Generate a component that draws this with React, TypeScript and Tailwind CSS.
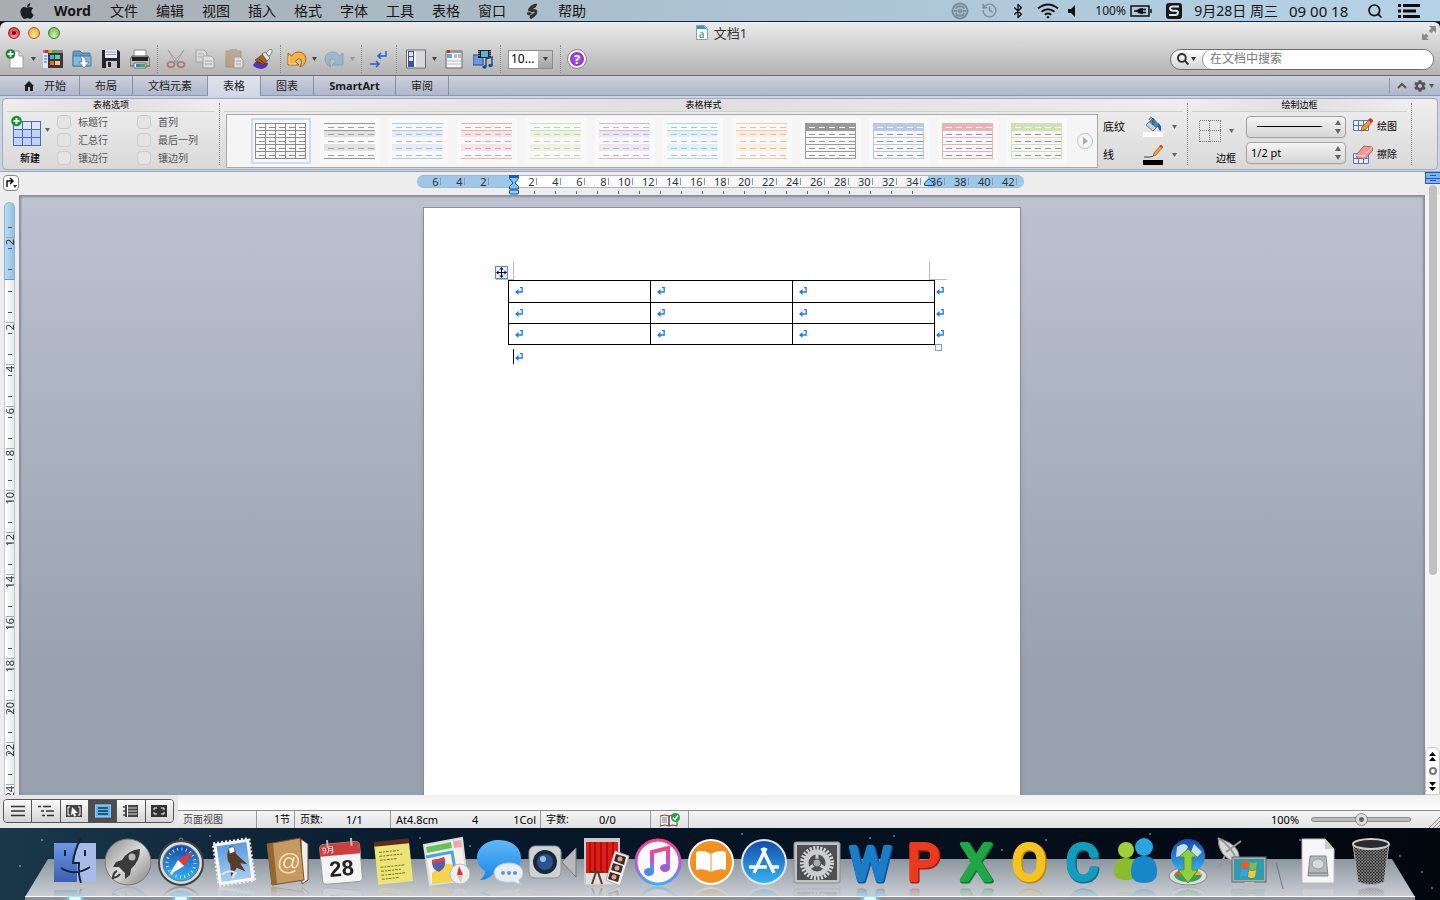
import React from "react";
import { clsx } from "clsx";
import { LuBluetooth, LuHistory, LuSearch } from "react-icons/lu";
import { FaApple, FaSearch } from "react-icons/fa";
import { IoMdSettings } from "react-icons/io";

const MENUS = ["文件", "编辑", "视图", "插入", "格式", "字体", "工具", "表格", "窗口"];
const TABS = [
  { label: "开始", width: "w-[68px]", home: true },
  { label: "布局", width: "w-[52px]" },
  { label: "文档元素", width: "w-[74px]" },
  { label: "表格", width: "w-[52px]", active: true },
  { label: "图表", width: "w-[52px]" },
  { label: "SmartArt", width: "w-[81px]" },
  { label: "审阅", width: "w-[52px]" },
];
const RULER_NUMBERS = [
  "6", "4", "2", "", "2", "4", "6", "8", "10", "12", "14", "16", "18", "20",
  "22", "24", "26", "28", "30", "32", "34", "36", "38", "40", "42",
];
const SIDE_NUMBERS = ["", "2", "4", "6", "8", "10", "12", "14", "16", "18", "20", "22", "24"];

/* ---------- Menu bar ---------- */

const MenuBar: React.FC = () => (
  <header className="flex h-[22px] shrink-0 items-center border-b border-[#10283c] bg-linear-to-r from-[#a9adb0] via-[#abc3d3] to-[#b6d2e6] text-[14px] leading-5 text-[#151515]">
    <button type="button" aria-label="Apple" className="flex w-[54px] justify-center">
      <FaApple className="size-[18px] text-[#1c1f24]" />
    </button>
    <nav className="flex gap-[18px]">
      <button type="button" className="w-[38px] text-left font-bold">Word</button>
      {MENUS.map((m) => (
        <button type="button" key={m}>{m}</button>
      ))}
      <button type="button" aria-label="脚本" className="w-4">
        <svg viewBox="0 0 16 18" className="h-4 w-4 fill-[#333]">
          <path d="M5 5Q9 0 14 1l-2 4-4 2q6-1 6 3 0 4-7 8l-2-1 1-3q-4 0-4-3l3-1q-3-2 0-5z" />
          <path d="M5 9.500q3 2 6 1M6 13q3-1 4-2" stroke="#aebfcb" fill="none" />
        </svg>
      </button>
      <button type="button">帮助</button>
    </nav>
    <div className="ml-auto flex items-center pr-5">
      <svg viewBox="0 0 18 18" className="size-[18px]" fill="none" stroke="#7c8f9c" strokeWidth="2">
        <circle cx="9" cy="9" r="7.500" />
        <path d="M4.500 7a5 5 0 0 1 9 0M13.500 11a5 5 0 0 1-9 0M3 9h3M12 9h3" />
        <circle cx="9" cy="9" r="1.500" />
      </svg>
      <LuHistory className="ml-3 size-[17px] text-[#7c8f9c]" />
      <LuBluetooth className="ml-3 size-4 text-[#111]" />
      <svg viewBox="0 0 22 16" className="ml-[11px] h-4 w-[22px]" fill="none" stroke="#111" strokeWidth="2">
        <path d="M1 5.500q10-8 20 0M4.500 8.800q6.500-5 13 0M7.800 11.800q3.200-2.500 6.400 0" />
        <circle cx="11" cy="14.300" r="1.300" fill="#111" stroke="none" />
      </svg>
      <svg viewBox="0 0 10 12" className="ml-2 h-3 w-[10px] fill-[#111]">
        <path d="M1 4h3l4-4v12L4 8H1z" />
      </svg>
      <span className="ml-[18px] w-[33px] text-[12px]">100%</span>
      <svg viewBox="0 0 22 12" className="ml-[2px] h-3 w-[22px]" fill="none" stroke="#111" strokeWidth="1.500">
        <path d="M17 1h2v10H1V1h18v10M21 4v4" />
        <path d="M4 6h3M13 4.500h3M13 7.500h3" />
        <path d="M6 6q2-3 7-3v6q-5 0-7-3z" fill="#111" stroke="none" />
      </svg>
      <svg viewBox="0 0 16 16" className="ml-[14px] size-4">
        <rect width="16" height="16" rx="3" fill="#161616" />
        <path d="M13 3.500H7q-3 0-3 2t3 2.200h3q2 .3 2 2t-2 2.300H3" fill="none" stroke="#d7e7f1" strokeWidth="2" />
      </svg>
      <span className="ml-3 whitespace-pre">9月28日 周三</span>
      <span className="ml-[11px] w-[62px] text-[15px]">09 00 18</span>
      <LuSearch className="ml-4 size-4 text-[#111]" strokeWidth={2.5} />
      <svg viewBox="0 0 22 14" className="ml-[15px] h-[14px] w-[22px] fill-[#0c0c0c]">
        <path d="M0 0h3v3H0zM0 5.500h3v3H0zM0 11h3v3H0zM5 0h17v3H5zM5 5.500h13v3H5zM5 11h17v3H5z" />
      </svg>
    </div>
  </header>
);

/* ---------- Title bar and standard toolbar ---------- */

const Caret: React.FC<{ className?: string }> = ({ className }) => (
  <svg viewBox="0 0 5 4" className={clsx("h-1 w-[5px] shrink-0 fill-current", className)}>
    <path d="M0 0h5L2.500 4z" />
  </svg>
);

const Dots: React.FC<{ className?: string }> = ({ className }) => (
  <span className={clsx("w-0 shrink-0 border-l border-dotted border-[#8a8a8a]", className)} />
);

interface ToolProps {
  label: string;
  faded?: boolean;
  menu?: boolean;
  narrow?: boolean;
  children: React.ReactNode;
}

const Tool: React.FC<ToolProps> = ({ label, faded, menu, narrow, children }) => (
  <>
    <button
      type="button"
      aria-label={label}
      className={clsx(
        "flex shrink-0 justify-center",
        narrow ? "w-[26px]" : "w-[29px]",
        faded && "opacity-45"
      )}
    >
      <svg viewBox="0 0 20 20" className="size-5">{children}</svg>
    </button>
    {menu && (
      <button type="button" aria-label={`${label}选项`} className="flex w-[9px] shrink-0 justify-center">
        <Caret className={faded ? "text-[#999]" : "text-[#444]"} />
      </button>
    )}
  </>
);

const Toolbar: React.FC = () => (
  <div className="flex h-8 items-center">
    <Tool label="新建" menu>
      <path d="M5 2h9l4 5v12H5z" fill="#fff" stroke="#999" />
      <path d="M14 2v5h4" fill="#ddd" stroke="#999" />
      <circle cx="5.500" cy="5" r="4.800" fill="#15802c" />
      <path d="M5.500 2v6M2.500 5h6" stroke="#fff" strokeWidth="1.800" />
    </Tool>
    <Tool label="模板">
      <path d="M0 1h20v18H0z" fill="#39393b" />
      <path d="M0 1h20v3H0z" fill="#8a8a8a" />
      <path d="M0 4h5v15H0z" fill="#dfe7fb" />
      <path d="M1 7h3M1 10h3M1 13h3" stroke="#4168c8" />
      <path d="M2 1h3v3H2z" fill="#e22" />
      <path d="M6 1h3v3H6z" fill="#fa0" />
      <path d="M10 1h3v3h-3z" fill="#3b3" />
      <path d="M7 6h4v4H7z" fill="#2bb5f0" />
      <path d="M12 6h5v4h-5z" fill="#57d4a0" />
      <path d="M7 12h4v4H7z" fill="#f60" />
      <path d="M12 12h5v4h-5z" fill="#fb9" />
    </Tool>
    <Tool label="打开">
      <path d="M1 17V3q0-1 1-1h6l2 2h8v13z" fill="#5e9bc1" stroke="#477f9f" />
      <path d="M1 7h18v10H1z" fill="#84b9d8" stroke="#477f9f" />
      <path d="M8 7q6 0 6 6h3l-5 6-5-6h3q0-4-2-6z" fill="#fff" stroke="#456" strokeWidth=".6" />
    </Tool>
    <Tool label="保存">
      <path d="M1 1h16l2 2v16H1z" fill="#252528" />
      <path d="M4 1h12v8H4z" fill="#e9eef6" />
      <path d="M5 3h10M5 5.500h10" stroke="#8b9ab5" />
      <path d="M5 12h11v7H5z" fill="#c3c6cc" />
      <path d="M7 13h3v5H7z" fill="#222" />
    </Tool>
    <Tool label="打印">
      <path d="M4 1h12v8H4z" fill="#fff" stroke="#888" />
      <path d="M0 11l2-4h16l2 4v6H0z" fill="#bbb" stroke="#555" />
      <path d="M2 8h16v4H2z" fill="#232323" />
      <path d="M4 14h12v5H4z" fill="#fff" stroke="#666" />
      <path d="M6 15h9v3H6z" fill="#2387cf" />
      <path d="M10 15h5v3h-5z" fill="#4aa755" />
    </Tool>
    <Dots className="mx-[3px] h-7" />
    <Tool label="剪切" faded>
      <path d="M2 1l10 12-2 1zM18 1L8 13l2 1z" fill="#fff" stroke="#555" strokeWidth=".8" />
      <ellipse cx="5" cy="15.500" rx="3.500" ry="2.700" fill="none" stroke="#a0302c" strokeWidth="2" />
      <ellipse cx="15" cy="15.500" rx="3.500" ry="2.700" fill="none" stroke="#a0302c" strokeWidth="2" />
    </Tool>
    <Tool label="复制" faded>
      <path d="M1 1h8l3 3v9H1z" fill="#eee" stroke="#777" />
      <path d="M8 7h8l3 3v9H8z" fill="#fff" stroke="#777" />
      <path d="M3 5h6M3 8h4M10 12h7M10 15h7" stroke="#888" />
    </Tool>
    <Tool label="粘贴" faded>
      <path d="M2 2h15v16H2z" fill="#b5803b" stroke="#85622c" />
      <path d="M6 0h7v4H6z" fill="#888" />
      <path d="M10 8h6l3 3v8h-9z" fill="#fff" stroke="#777" />
      <path d="M12 12h5M12 15h5" stroke="#888" />
    </Tool>
    <Tool label="格式刷">
      <path d="M0 16q3-5 6-4l9 2q0 5-7 6-7-1-8-4z" fill="#5233c9" />
      <path d="M2 11l8-6 5 6-5 6z" fill="#a46320" stroke="#5b330d" strokeWidth=".6" />
      <path d="M4 12l7 4M6 10l6 5" stroke="#5b330d" />
      <path d="M9 5l3-2 5 6-3 3z" fill="#e0e0e0" stroke="#444" strokeWidth=".6" />
      <path d="M13 4l4-4q3 0 2 3l-3 4z" fill="#fff" stroke="#555" strokeWidth=".7" />
    </Tool>
    <Dots className="mx-[3px] h-7" />
    <Tool label="撤销" menu narrow>
      <path d="M1 4v12h11l-3.500-3.500q2-4 5-2.500 2.500 3-.5 8 6-2 6-8.500Q18 3 11 3 7 3 4.500 7z" fill="#f7b043" stroke="#a76508" />
      <path d="M2 7v8h7" fill="none" stroke="#ffdf9c" />
    </Tool>
    <Tool label="重做" menu faded>
      <path d="M19 4v12H8l3.500-3.500q-2-4-5-2.500-2.500 3 .5 8-6-2-6-8.500Q2 3 9 3q4 0 6.500 4z" fill="#6ea9d0" stroke="#3b7aa3" />
    </Tool>
    <Dots className="mx-1 h-7" />
    <Tool label="显示段落标记" narrow>
      <path d="M17 2v5H9M12 4L9 7l3 3" fill="none" stroke="#2563dc" strokeWidth="1.500" />
      <path d="M1 15h9M7 12l3 3-3 3" fill="none" stroke="#2563dc" strokeWidth="1.500" />
    </Tool>
    <Dots className="mx-1 h-7" />
    <Tool label="边栏" menu>
      <path d="M.5 1h19v18H.5z" fill="#f3f3f5" stroke="#666" />
      <path d="M10 2h9v16h-9z" fill="#d8d8da" />
      <path d="M2 2h6v16H2z" fill="#3a53a0" />
      <path d="M3 3h4v4H3zM3 8h4v4H3z" fill="#dfe6fa" />
    </Tool>
    <Tool label="工具箱">
      <path d="M2 2h16v17H2z" fill="#f5f5f5" stroke="#666" />
      <path d="M2 2h16v2H2z" fill="#999" />
      <path d="M3 5h5v4H3z" fill="#58b1d5" />
      <path d="M10 5h3v4h-3zM14 5h3v4h-3z" fill="#bbb" />
      <path d="M3 12h14M3 15h14" stroke="#bbb" />
      <path d="M3 1h3v3H3z" fill="#d22" />
    </Tool>
    <Tool label="媒体">
      <path d="M0 6h10v10H0z" fill="#6d97de" stroke="#23468c" />
      <path d="M5 1h13v8H5z" fill="#222" />
      <path d="M8 2h7v6H8z" fill="#51b5d8" />
      <path d="M6 2v6M17 2v6" stroke="#eee" strokeDasharray="1 1" />
      <path d="M13 18V10l6-2v8" fill="none" stroke="#1f4a86" strokeWidth="1.500" />
      <ellipse cx="11.500" cy="18" rx="2.200" ry="1.700" fill="#1f4a86" />
      <ellipse cx="17.500" cy="16.500" rx="2.200" ry="1.700" fill="#1f4a86" />
    </Tool>
    <Dots className="mx-[3px] h-7" />
    <div className="relative ml-1 flex h-[19px] w-[45px] border border-[#8d8d8d] bg-white">
      <select aria-label="缩放" className="w-full appearance-none pl-[2px] text-[12px] leading-4 text-black">
        <option>10...</option>
      </select>
      <span className="pointer-events-none absolute inset-y-0 right-0 flex w-[14px] items-center justify-center bg-linear-to-b from-[#c9c9c9] to-[#a5a5a5]">
        <Caret className="text-[#444]" />
      </span>
    </div>
    <Dots className="mx-[7px] h-7" />
    <button type="button" aria-label="帮助" className="flex size-[18px] items-center justify-center rounded-full border-2 border-white bg-radial from-[#c45bee] to-[#7a1bb8] text-[13px] leading-[14px] font-bold text-white outline outline-[#888]">
      ?
    </button>
    <div className="mr-[6px] ml-auto flex h-[21px] w-[264px] rounded-full border border-[#6d6d6d] bg-linear-to-b from-white to-[#d5d5d5]">
      <button type="button" aria-label="搜索选项" className="flex w-[31px] items-center justify-center gap-[2px] text-[#333]">
        <FaSearch className="size-3" />
        <Caret />
      </button>
      <input
        type="search"
        aria-label="在文档中搜索"
        placeholder="在文档中搜索"
        className="min-w-0 flex-1 rounded-full border-l border-[#8a8a8a] bg-white pl-[7px] text-[12px] leading-4 placeholder:text-[#777]"
      />
    </div>
  </div>
);

const TitleBar: React.FC = () => (
  <div className="shrink-0 rounded-t-md border-b border-[#6b6b6f] bg-linear-to-b from-[#ececec] to-[#b3b3b3]">
    <div className="grid h-[21px] grid-cols-3 items-center">
      <div className="flex gap-2 pl-2">
        <button type="button" aria-label="关闭" className="flex size-3 items-center justify-center rounded-full border border-[#93262b] bg-radial-[at_50%_80%] from-[#ff9c97] to-[#d8222f]">
          <span className="size-1 rounded-full bg-[#6d0a10]" />
        </button>
        <button type="button" aria-label="最小化" className="size-3 rounded-full border border-[#9a6420] bg-radial-[at_50%_80%] from-[#ffe8a0] to-[#eb9a2e]" />
        <button type="button" aria-label="缩放窗口" className="size-3 rounded-full border border-[#3c7b2f] bg-radial-[at_50%_80%] from-[#d1f5ae] to-[#5cb04a]" />
      </div>
      <h1 className="flex items-center justify-center gap-[6px] pl-[3px] text-[13px] leading-4 text-[#333]">
        <svg viewBox="0 0 12 15" className="h-[15px] w-3">
          <path d="M.5.5h8l3 3v11H.5z" fill="#fff" stroke="#999" />
          <path d="M1 1h7l3 3H1z" fill="#1e9fc5" />
          <text x="3" y="13" fontSize="12" fill="#2276a8" fontFamily="Liberation Serif">a</text>
        </svg>
        文档1
      </h1>
      <button type="button" aria-label="全屏" className="mr-1 justify-self-end">
        <svg viewBox="0 0 14 14" className="size-[14px] fill-[#8a8a8a]">
          <path d="M7 0h7v7l-2.300-2.300-2.500 2.500-2.400-2.400 2.500-2.500zM0 7l2.300 2.300 1.800-1.800 2.400 2.400-1.800 1.800L7 14H0z" />
        </svg>
      </button>
    </div>
    <Toolbar />
  </div>
);

/* ---------- Ribbon ---------- */

const RibbonTabs: React.FC = () => (
  <div className="flex h-5 shrink-0 items-stretch border-b border-[#8e98b4] bg-linear-to-b from-[#cdd1dd] to-[#b0b7cb] text-[11px] leading-4 text-[#1c1c1c]">
    {TABS.map((tab) => (
      <button
        type="button"
        key={tab.label}
        className={clsx(
          "box-content flex items-center justify-center border-r border-[#878fa4]",
          tab.width,
          tab.home && "gap-[10px] pl-[11px]",
          tab.active && "-mb-px bg-linear-to-b from-[#dfe2ee] to-[#d3d7e7]",
          tab.label === "SmartArt" && "font-bold"
        )}
      >
        {tab.home && (
          <svg viewBox="0 0 10 10" className="size-[10px] fill-[#1d1d1d]">
            <path d="M5 0l5 5H9v5H6V6H4v4H1V5H0z" />
          </svg>
        )}
        {tab.label}
      </button>
    ))}
    <button type="button" aria-label="收起功能区" className="my-[2px] ml-auto flex w-6 items-center justify-center border-l border-[#8e96aa]">
      <svg viewBox="0 0 10 7" className="h-[7px] w-[10px]" fill="none" stroke="#555" strokeWidth="2">
        <path d="M1 6l4-4 4 4" />
      </svg>
    </button>
    <button type="button" aria-label="功能区设置" className="flex w-[27px] items-center gap-[2px] text-[#555]">
      <IoMdSettings className="size-[14px]" />
      <Caret />
    </button>
  </div>
);

const GroupTitle: React.FC<{ children: React.ReactNode }> = ({ children }) => (
  <h2 className="mx-1 flex h-[13px] items-center justify-center border-b border-[#d0d0d0] bg-linear-to-r from-transparent via-[#dfdfdf] to-transparent text-[9px] leading-3 text-black">
    {children}
  </h2>
);

const CheckOption: React.FC<{ label: string }> = ({ label }) => (
  <label className="flex h-[18px] items-center gap-[7px] text-[10px] leading-4 text-[#555]">
    <input type="checkbox" className="size-[14px] appearance-none rounded border border-[#cbcbcf] bg-[#e4e4e4]" />
    {label}
  </label>
);

const DASH = "6 4";

const GridThumb: React.FC = () => (
  <svg viewBox="0 0 51 36" className="h-9 w-[51px]" fill="none" stroke="#8c8c8c">
    <rect x=".5" y=".5" width="50" height="35" />
    <path d="M10.500 0v36M20.500 0v36M30.500 0v36M40.500 0v36M0 7.500h51M0 14.500h51M0 21.500h51M0 28.500h51" />
    <path d="M4 4.500h47M4 11.500h47M4 18.500h47M4 25.500h47M4 32.500h47" strokeDasharray={DASH} />
  </svg>
);

const StripedThumb: React.FC<{ line: string; fill: string; dash: string }> = ({ line, fill, dash }) => (
  <svg viewBox="0 0 51 36" className="h-9 w-[51px]" fill="none">
    <path d="M0 7h51v7H0zM0 21h51v7H0z" fill={fill} />
    <path d="M0 .5h51M0 7.500h51M0 35.500h51" stroke={line} />
    <path d="M4 4.500h47M4 11.500h47M4 18.500h47M4 25.500h47M4 32.500h47" stroke={dash} strokeDasharray={DASH} />
  </svg>
);

const HeaderThumb: React.FC<{ line: string }> = ({ line }) => (
  <svg viewBox="0 0 51 36" className="h-9 w-[51px]" fill="none">
    <path d="M0 0h51v8H0z" fill={line} />
    <rect x=".5" y=".5" width="50" height="35" stroke={line} />
    <path d="M0 14.500h51M0 21.500h51M0 28.500h51" stroke={line} />
    <path d="M4 4.500h47" stroke="#fff" strokeDasharray={DASH} />
    <path d="M4 11.500h47M4 18.500h47M4 25.500h47M4 32.500h47" stroke="#949494" strokeDasharray={DASH} />
  </svg>
);

const STYLES: { name: string; thumb: React.ReactNode }[] = [
  { name: "网格", thumb: <GridThumb /> },
  { name: "灰色底纹", thumb: <StripedThumb line="#969696" fill="#e2e2e2" dash="#a2a2a2" /> },
  { name: "蓝色底纹", thumb: <StripedThumb line="#b4c8e4" fill="#e6ebf4" dash="#abbcdb" /> },
  { name: "红色底纹", thumb: <StripedThumb line="#e6b0b2" fill="#f5e5e6" dash="#d9a5aa" /> },
  { name: "绿色底纹", thumb: <StripedThumb line="#cfe0b8" fill="#edf3e3" dash="#c2d4aa" /> },
  { name: "紫色底纹", thumb: <StripedThumb line="#ccbcda" fill="#ece7f0" dash="#c3b4d0" /> },
  { name: "青色底纹", thumb: <StripedThumb line="#a9dbe6" fill="#e3f1f4" dash="#9dcad8" /> },
  { name: "橙色底纹", thumb: <StripedThumb line="#f8cba4" fill="#faeee2" dash="#efbd9c" /> },
  { name: "灰色标题", thumb: <HeaderThumb line="#999999" /> },
  { name: "蓝色标题", thumb: <HeaderThumb line="#b7c9e3" /> },
  { name: "红色标题", thumb: <HeaderThumb line="#e7b3b6" /> },
  { name: "绿色标题", thumb: <HeaderThumb line="#cfe2b6" /> },
];

const Stepper: React.FC = () => (
  <svg viewBox="0 0 6 14" className="pointer-events-none absolute top-1 right-[5px] h-[14px] w-[6px] fill-[#666]">
    <path d="M0 5h6L3 0zM0 9h6l-3 5z" />
  </svg>
);

const Ribbon: React.FC = () => (
  <section className="shrink-0 border-b border-[#98a2b5] bg-[#ced3e1] px-[2px] pt-[2px] pb-px">
    <div className="flex h-[72px] rounded border border-[#9fabc2] bg-linear-to-b from-[#efefef] to-[#d9d9d9]">
      <div className="w-[216px] shrink-0">
        <GroupTitle>表格选项</GroupTitle>
        <div className="flex">
          <button type="button" className="flex w-[54px] flex-col items-center gap-[3px] text-[10px] leading-4 font-medium text-black">
            <span className="flex items-center">
              <svg viewBox="0 0 36 32" className="mt-[3px] mr-[-2px] h-8 w-9">
                <path d="M2 6h28v25H2z" fill="#4a6db8" />
                <path d="M3 7h8v7H3zM12 7h8v7h-8zM21 7h8v7h-8z" fill="#dde8ff" />
                <path d="M3 15h8v7H3zM12 15h8v7h-8zM21 15h8v7h-8zM3 23h8v7H3zM12 23h8v7h-8zM21 23h8v7h-8z" fill="#c2d1f6" />
                <circle cx="5.500" cy="6" r="5.300" fill="#12962d" />
                <path d="M5.500 3v6M2.500 6h6" stroke="#fff" strokeWidth="2" />
              </svg>
              <Caret className="text-[#666]" />
            </span>
            新建
          </button>
          <div className="grid grid-cols-2 gap-x-[19px] pt-px">
            <CheckOption label="标题行" />
            <CheckOption label="首列" />
            <CheckOption label="汇总行" />
            <CheckOption label="最后一列" />
            <CheckOption label="镶边行" />
            <CheckOption label="镶边列" />
          </div>
        </div>
      </div>
      <Dots className="my-1" />
      <div className="min-w-0 flex-1">
        <GroupTitle>表格样式</GroupTitle>
        <div className="flex items-center pt-[2px] pl-[6px]">
          <div className="flex h-[54px] min-w-0 flex-1 items-center border border-[#a9a9a9] bg-[#f5f5f5] pl-6">
            <div className="flex min-w-0 flex-1 justify-between overflow-hidden">
              {STYLES.map((style, i) => (
                <button
                  type="button"
                  key={style.name}
                  aria-label={style.name}
                  className={clsx(
                    "flex h-[46px] w-[60px] shrink-0 items-center border-2 bg-[#f9f9f9] pl-[2px]",
                    i === 0 ? "border-[#c7dff0]" : "border-transparent"
                  )}
                >
                  {style.thumb}
                </button>
              ))}
            </div>
            <button type="button" aria-label="更多样式" className="mx-1 ml-[10px] flex size-4 shrink-0 items-center justify-center rounded-full border border-[#c3c3c3]">
              <svg viewBox="0 0 5 8" className="h-2 w-[5px] fill-[#aaa]">
                <path d="M0 0l5 4-5 4z" />
              </svg>
            </button>
          </div>
          <div className="flex w-[89px] shrink-0 flex-col gap-1 pl-[5px] text-[11px] leading-4 text-black">
            <button type="button" className="flex h-6 items-center">
              <span className="w-10 text-left">底纹</span>
              <svg viewBox="0 0 20 20" className="mr-[9px] size-5">
                <path d="M0 15h20v5H0z" fill="#fff" />
                <path d="M3 8l7-7 6 7-6 6z" fill="#c8d2da" stroke="#555" strokeWidth=".8" />
                <path d="M6 5l4-4 6 7-3 3z" fill="#4286b8" />
                <path d="M15 6q4 2 3 8-2 0-3-4z" fill="#1d5f9c" />
                <path d="M10 8V2q-2-3-4 1" fill="none" stroke="#444" />
              </svg>
              <Caret className="text-[#666]" />
            </button>
            <button type="button" className="flex h-6 items-center">
              <span className="w-10 text-left">线</span>
              <svg viewBox="0 0 20 20" className="mr-[9px] size-5">
                <path d="M0 15h20v5H0z" fill="#000" />
                <path d="M1 12h6q3 0 4-2" fill="none" stroke="#444" />
                <path d="M10 11l1-3 7-8 2 2-7 8z" fill="#f4a02c" stroke="#7a4a10" strokeWidth=".6" />
                <path d="M16 1l2-1 2 2-1 1z" fill="#d33" />
              </svg>
              <Caret className="text-[#666]" />
            </button>
          </div>
        </div>
      </div>
      <Dots className="my-1" />
      <div className="w-[223px] shrink-0">
        <GroupTitle>绘制边框</GroupTitle>
        <div className="flex pt-1 pl-[11px] text-[10px] leading-4 text-black">
          <button type="button" className="flex w-[47px] flex-col gap-2 pt-1">
            <span className="flex items-center gap-2">
              <svg viewBox="0 0 22 22" className="size-[22px]" fill="none" stroke="#777" strokeDasharray="1 1">
                <path d="M1 .5h21M1 10.500h21M1 21.500h21M.5 1v21M10.500 1v21M21.500 1v21" />
              </svg>
              <Caret className="text-[#666]" />
            </span>
            <span className="pl-[7px]">边框</span>
          </button>
          <div className="flex w-[100px] flex-col gap-1">
            <span className="relative h-[22px]">
              <select aria-label="线型" className="h-full w-full appearance-none rounded border border-[#a2a2a2] bg-linear-to-b from-[#f4f4f4] to-[#d6d6d6] shadow-xs">
                <option aria-label="单线" />
              </select>
              <span className="pointer-events-none absolute top-[10px] right-6 left-[11px] border-t border-black" />
              <Stepper />
            </span>
            <span className="relative h-[22px]">
              <select aria-label="粗细" className="h-full w-full appearance-none rounded border border-[#a2a2a2] bg-linear-to-b from-[#f4f4f4] to-[#d6d6d6] pl-1 text-[11px] shadow-xs">
                <option>1/2 pt</option>
              </select>
              <Stepper />
            </span>
          </div>
          <div className="flex flex-col gap-2 pl-[7px]">
            <button type="button" className="flex h-5 items-center gap-1">
              <svg viewBox="0 0 20 20" className="size-5">
                <path d="M.5 4.500h15v10H.5zM.5 9.500h15M5.500 4.500v10M10.500 4.500v10" fill="#eaf1ff" stroke="#4e78c4" />
                <path d="M8 15l1-4 8-8 3 2-8 9z" fill="#f59b24" stroke="#6e3b0c" strokeWidth=".6" />
                <path d="M15 4l2-2 3 2-2 3z" fill="#d12f26" />
              </svg>
              绘图
            </button>
            <button type="button" className="flex h-5 items-center gap-1">
              <svg viewBox="0 0 20 20" className="size-5">
                <path d="M.5 9.500h15v10H.5zM.5 14.500h15M5.500 9.500v10M10.500 9.500v10" fill="#eaf1ff" stroke="#4e78c4" />
                <path d="M3 11L11 2l8 1 1 3-8 9-8-1z" fill="#ec9a9a" stroke="#a54848" strokeWidth=".8" />
                <path d="M3 11l8 1 8-9" fill="none" stroke="#fbd3d3" />
              </svg>
              擦除
            </button>
          </div>
        </div>
      </div>
      <Dots className="my-1 mr-[25px]" />
    </div>
  </section>
);

/* ---------- Rulers and document ---------- */

const HorizontalRuler: React.FC = () => (
  <div className="relative flex h-[23px] shrink-0 justify-center bg-[#ededed]">
    <button type="button" aria-label="制表位" className="absolute top-[3px] left-[3px] flex size-4 items-center justify-center rounded border border-[#888] bg-white">
      <svg viewBox="0 0 12 12" className="size-3" fill="none" stroke="#111" strokeWidth="1.500">
        <path d="M2 10V4h5M5 1l3 3-3 3" />
        <path d="M8 8h4l-2 3z" fill="#333" stroke="none" />
      </svg>
    </button>
    <div className="relative w-[607px] pt-[3px]">
      <div className="flex h-[13px] items-start rounded-full border-y border-[#a9b4be] bg-[linear-gradient(to_right,#9cc8ea_96px,#fff_96px,#f2f5f5_511px,#9cc8ea_511px)] text-[11px] leading-[11px] text-[#333]">
        {RULER_NUMBERS.map((n, i) => (
          <span key={i} className="flex w-6 shrink-0 items-center justify-end gap-px">
            {n}
            {n && <span className="h-[7px] w-px bg-[#8d9aa5]" />}
          </span>
        ))}
      </div>
      <div className="flex gap-5 pt-[3px] pl-[117px]">
        {Array.from({ length: 19 }, (_, i) => (
          <span key={i} className="h-[3px] w-px bg-[#5d6c7c]" />
        ))}
      </div>
      <svg viewBox="0 0 10 20" className="absolute top-[3px] left-[92px] h-5 w-[10px]">
        <path d="M.5.5h9v3L6 8l3.500 3.500V14h-9v-2.500L4 8 .5 3.500z" fill="#7cc5f5" stroke="#1847a0" />
        <path d="M0 0h10v3H0z" fill="#2158c4" />
        <rect x=".5" y="15" width="9" height="4" rx="1" fill="#8fd3fa" stroke="#1847a0" />
      </svg>
      <svg viewBox="0 0 10 8" className="absolute top-[6px] left-[507px] h-2 w-[10px]">
        <path d="M5 .7L9.500 5v2.500h-9V5z" fill="#7cc5f5" stroke="#1847a0" />
      </svg>
    </div>
    <button type="button" aria-label="拆分窗口" className="absolute top-0 right-0 flex h-3 w-[15px] flex-col justify-between border-y border-l border-[#2459b5] bg-[#7fb0f0] py-[2px]">
      <span className="mx-1 h-px self-stretch bg-[#2459b5]" />
      <span className="h-px self-stretch bg-[#2459b5]" />
      <span className="mx-1 h-px self-stretch bg-[#2459b5]" />
    </button>
  </div>
);

const SideCell: React.FC<{ n: string }> = ({ n }) => (
  <div className="relative h-[42px] shrink-0">
    {n && <span className="absolute top-0 left-[1px] h-px w-2 bg-[#a2a8ad]" />}
    <span className="absolute top-[2px] left-[-1px] w-3 rotate-180 text-[11px] leading-3 [writing-mode:vertical-rl]">{n}</span>
    <span className="absolute top-[11px] left-[3px] h-px w-1 bg-[#555]" />
    <span className="absolute top-8 left-[3px] h-px w-1 bg-[#555]" />
  </div>
);

const VerticalRuler: React.FC = () => (
  <div className="w-[19px] shrink-0 overflow-hidden bg-[#ededed] pt-[7px] pl-1">
    <div className="h-full w-[11px] text-[#333]">
      <div className="flex h-[78px] flex-col rounded-t-full border border-b-[#6d98b9] border-[#8fb4cf] bg-linear-to-r from-[#b9dcf6] to-[#92bfe2]">
        <div className="flex flex-1 items-end pb-[9px] pl-[3px]">
          <span className="h-px w-1 bg-[#555]" />
        </div>
        <SideCell n="2" />
      </div>
      <div className="h-full border-x border-[#c3c7ca] bg-linear-to-r from-white to-[#e6eaeb]">
        {SIDE_NUMBERS.map((n, i) => (
          <SideCell key={i} n={n} />
        ))}
      </div>
    </div>
  </div>
);

const ReturnMark: React.FC = () => (
  <svg viewBox="0 0 8 8" className="h-2 w-2" fill="none" stroke="#1f7af5" strokeWidth="1.300">
    <path d="M5 .7h2.200v4.300H2" />
    <path d="M3.500 2v6L0 5z" fill="#1f7af5" stroke="none" />
  </svg>
);

const Page: React.FC = () => (
  <article className="mx-auto mt-3 h-full w-[598px] border border-b-0 border-[#868c99] bg-white pt-[72px] pl-[84px] shadow-md">
    <div className="relative w-[438px]">
      <span className="absolute -top-[18px] -left-3 h-[18px] w-[18px] border-r border-b border-[#bbb]" />
      <span className="absolute -top-[18px] left-[421px] h-[18px] w-[18px] border-b border-l border-[#bbb]" />
      <button type="button" aria-label="移动表格" className="absolute -top-[14px] -left-[13px] size-[13px] border border-[#5d84d6] bg-[#e5ecfb]">
        <svg viewBox="0 0 11 11" className="size-[11px]" stroke="#111" fill="#111">
          <path d="M5.500 1v9M1 5.500h9" />
          <path d="M5.500 0l2 2.500h-4zM5.500 11l2-2.500h-4zM0 5.500l2.500-2v4zM11 5.500l-2.500-2v4z" stroke="none" />
        </svg>
      </button>
      <table className="w-[438px] table-fixed border-collapse">
        <tbody>
          {[0, 1, 2].map((row) => (
            <tr key={row} className={row === 0 ? "h-[22px]" : "h-[21px]"}>
              {[0, 1, 2].map((col) => (
                <td key={col} className="w-[142px] border border-black p-0 pb-px pl-[6px]">
                  <ReturnMark />
                </td>
              ))}
              <td className="p-0 pb-px pl-px">
                <ReturnMark />
              </td>
            </tr>
          ))}
        </tbody>
      </table>
      <span className="absolute top-[64px] left-[427px] size-[7px] border border-[#7c9be0]" />
      <p className="mt-1 ml-[5px] flex h-[15px] items-center border-l border-black pl-px">
        <ReturnMark />
      </p>
    </div>
  </article>
);

const ScrollButtons: React.FC = () => (
  <div className="mt-auto flex flex-col items-center rounded-t-md border border-[#c8c8c8] bg-white">
    <button type="button" aria-label="上一页" className="flex h-4 items-center">
      <svg viewBox="0 0 7 9" className="h-[9px] w-[7px]"><path d="M0 4h7L3.500 0zM0 9h7L3.500 5z" /></svg>
    </button>
    <button type="button" aria-label="选择浏览对象" className="flex h-[14px] items-center">
      <span className="size-2 rounded-full border-2 border-[#777]" />
    </button>
    <button type="button" aria-label="下一页" className="flex h-4 items-center">
      <svg viewBox="0 0 7 9" className="h-[9px] w-[7px]"><path d="M0 0h7L3.500 4zM0 5h7L3.500 9z" /></svg>
    </button>
  </div>
);

const Workspace: React.FC = () => (
  <main className="flex min-h-0 flex-1">
    <VerticalRuler />
    <div className="min-w-0 flex-1 overflow-hidden bg-linear-to-b from-[#bdc2d0] to-[#98a2ae] to-80% shadow-[inset_2px_2px_2px_#888e99,inset_-2px_0_2px_#888e99]">
      <Page />
    </div>
    <div className="relative flex w-[15px] shrink-0 flex-col bg-[#f5f5f5]">
      <span className="absolute -top-[10px] left-1 h-[65%] w-2 rounded-full bg-[#c1c1c1]" />
      <ScrollButtons />
    </div>
  </main>
);

/* ---------- Status bar ---------- */

const VIEWS: { name: string; icon: React.ReactNode }[] = [
  { name: "草稿视图", icon: <path d="M1 3.500h14M1 8h14M1 12.500h14" /> },
  { name: "大纲视图", icon: <path d="M0 3.500h3M5 3.500h8M3 8h3M8 8h8M4 12.500h3M9 12.500h7" /> },
  {
    name: "出版版式视图",
    icon: (
      <>
        <path d="M0 2h16v12H0z" fill="#444" stroke="none" />
        <path d="M6 4l6 6H9l1 3-2 .5-1-3-2 2z" fill="#fff" stroke="none" />
        <path d="M4 4H2v8h2M12 4h2v8h-2" stroke="#fff" strokeWidth="1" />
      </>
    ),
  },
  {
    name: "页面视图",
    icon: (
      <>
        <path d="M0 2h16v12H0z" fill="#5eb5f2" stroke="#a5dcff" strokeWidth="1" />
        <path d="M3 5h10M3 8h10M3 11h10" stroke="#16384f" strokeWidth="1.500" />
      </>
    ),
  },
  {
    name: "笔记本版式视图",
    icon: (
      <>
        <path d="M2 2h13v12H2z" fill="#444" stroke="none" />
        <path d="M5 5h9M5 8h9M5 11h9" stroke="#ddd" strokeWidth="1" />
        <path d="M4.500 2v12" stroke="#fff" strokeWidth="1" />
        <path d="M0 4h4M0 8h4M0 12h4" stroke="#444" />
      </>
    ),
  },
  {
    name: "全屏视图",
    icon: (
      <>
        <path d="M0 2h16v12H0z" fill="#333" stroke="none" />
        <path d="M3 7V5h3M10 5h3v2M13 9v2h-3M6 11H3V9" stroke="#fff" strokeWidth="1" />
      </>
    ),
  },
];

const StatusBar: React.FC = () => (
  <footer className="flex h-[33px] shrink-0 bg-[#e6e6e6] text-black">
    <div className="w-[178px] shrink-0 py-1 pl-[3px]">
      <div className="flex h-6 w-[171px] divide-x divide-[#555] overflow-hidden rounded border border-[#555]">
        {VIEWS.map((view) => (
          <button
            type="button"
            key={view.name}
            aria-label={view.name}
            className={clsx(
              "flex flex-1 items-center justify-center",
              view.name === "页面视图" ? "bg-[#4a4d52]" : "bg-linear-to-b from-[#fafafa] to-[#d4d4d4]"
            )}
          >
            <svg viewBox="0 0 16 16" className="size-4" fill="none" stroke="#333" strokeWidth="1.500">
              {view.icon}
            </svg>
          </button>
        ))}
      </div>
    </div>
    <div className="flex min-w-0 flex-1 flex-col">
      <div className="h-[15px] bg-linear-to-b from-[#f0f0f0] to-white" />
      <div className="flex flex-1 items-stretch border-t border-[#8c8c8c] bg-linear-to-b from-[#f4f4f4] to-[#e1e2e4] text-[11px] leading-[17px] whitespace-nowrap">
        <span className="w-[79px] border-r border-[#999] pl-[5px] text-[10px] text-[#444]">页面视图</span>
        <span className="w-[38px] border-r border-[#999] pr-1 text-right text-[10px]">1节</span>
        <span className="flex w-24 border-r border-[#999] pl-[5px]">
          <span className="w-[46px] text-[10px]">页数:</span>1/1
        </span>
        <span className="flex w-[150px] border-r border-[#999] pr-1 pl-[5px]">
          <span className="w-[76px]">At4.8cm</span>4
          <span className="ml-auto">1Col</span>
        </span>
        <span className="flex w-[110px] border-r border-[#999] pl-[5px]">
          <span className="w-[53px] text-[10px]">字数:</span>0/0
        </span>
        <span className="flex w-[38px] items-center justify-center border-r border-[#999]">
          <svg viewBox="0 0 20 14" className="h-[14px] w-5">
            <path d="M0 3q5-2 9 0v10q-4-2-9 0zM9 3q4-2 8 0v10q-4-2-8 0z" fill="#eee" stroke="#6b4039" />
            <path d="M2 5h5M2 7h5M2 9h5" stroke="#888" />
            <circle cx="15.500" cy="4.500" r="4.500" fill="#22a243" />
            <path d="M13 4.500l2 2 3-4" stroke="#fff" strokeWidth="1.500" fill="none" />
          </svg>
        </span>
        <label htmlFor="zoom" className="ml-auto w-10">100%</label>
        <input
          id="zoom"
          type="range"
          defaultValue={50}
          className="my-auto h-[5px] w-[100px] appearance-none rounded-full border border-[#8d8d8d] bg-[#b9b9b9] [&::-webkit-slider-thumb]:size-[11px] [&::-webkit-slider-thumb]:appearance-none [&::-webkit-slider-thumb]:rounded-full [&::-webkit-slider-thumb]:border-[3px] [&::-webkit-slider-thumb]:border-[#ddd] [&::-webkit-slider-thumb]:bg-[#666] [&::-webkit-slider-thumb]:outline [&::-webkit-slider-thumb]:outline-[#888]"
        />
        <svg viewBox="0 0 12 12" className="mt-auto ml-[17px] size-3" stroke="#888">
          <path d="M1 12L12 1M5 12l7-7M9 12l3-3" />
        </svg>
      </div>
    </div>
  </footer>
);

/* ---------- Dock ---------- */

interface OfficeLetterProps {
  letter: string;
  color: string;
  dark: string;
  size?: number;
}

const OfficeLetter: React.FC<OfficeLetterProps> = ({ letter, color, dark, size = 50 }) => (
  <g fontFamily="Roboto" fontSize={size} textAnchor="middle" strokeLinejoin="round" strokeLinecap="round">
    <text x="25" y="43" fill={dark} stroke={dark} strokeWidth="5">{letter}</text>
    <text x="24" y="42" fill={color} stroke={color} strokeWidth="4">{letter}</text>
  </g>
);

const DOCK_ICONS: { name: string; running?: boolean; icon: React.ReactNode }[] = [
  {
    name: "Finder",
    running: true,
    icon: (
      <>
        <path d="M3 5h42v39H3z" fill="#a9bbe8" />
        <path d="M3 5h24q-4 12-4 21h3v18H3z" fill="url(#finder)" />
        <path d="M14 12v6M34 12v6" stroke="#15243d" strokeWidth="2" />
        <path d="M30 0q-7 13-8 25h6q-1 12 2 20M10 30q14 9 29-1" stroke="#15243d" strokeWidth="2" fill="none" />
      </>
    ),
  },
  {
    name: "Launchpad",
    icon: (
      <>
        <circle cx="24" cy="24" r="23" fill="url(#silver)" stroke="#777" />
        <path d="M36 11q-12 1-18 11l-6 2-3 5 6 0 6 6 0 6 5-4 1-6q9-8 9-20z" fill="#3a3a3a" />
        <circle cx="28" cy="19" r="3.500" fill="#b8b8b8" />
        <path d="M13 33q-4 2-4 7 5-1 7-4" fill="none" stroke="#3a3a3a" strokeWidth="2" />
      </>
    ),
  },
  {
    name: "Safari",
    running: true,
    icon: (
      <>
        <circle cx="24" cy="2" r="2" fill="none" stroke="#888" />
        <circle cx="24" cy="25" r="22" fill="#dcdfe2" stroke="#444" strokeWidth="2" />
        <circle cx="24" cy="25" r="18" fill="url(#blue)" stroke="#6b7580" />
        <circle cx="24" cy="25" r="14" fill="none" stroke="#fff" strokeWidth="3" strokeDasharray="1 3.400" opacity=".8" />
        <path d="M36 13L27 28l-6-6z" fill="#e33" />
        <path d="M12 37l9-15 6 6z" fill="#fff" />
      </>
    ),
  },
  {
    name: "Mail",
    icon: (
      <g transform="rotate(-8 24 24)">
        <rect x="6" y="3" width="36" height="42" fill="#fff" stroke="#eee" strokeWidth="3" strokeDasharray="2 2" />
        <rect x="9" y="6" width="30" height="36" fill="url(#mail)" />
        <path d="M22 8q6 0 5 8l10 12-7-2 4 9-8-5-7 8 1-12q-5-8 2-18z" fill="#573c28" />
        <path d="M10 35q8-5 14 0l-4 5" fill="none" stroke="#dfe7f0" strokeWidth="2" />
        <path d="M21 10q3-2 5 0v4l-5 1z" fill="#fff" />
      </g>
    ),
  },
  {
    name: "通讯录",
    icon: (
      <>
        <path d="M38 1l7 5v36l-6 4z" fill="#eee" stroke="#6b4b25" />
        <path d="M4 6L37 0l4 42-32 5z" fill="#c69a5f" stroke="#75512a" />
        <path d="M4 6l6-1 4 41-5 1z" fill="#95662f" />
        <text x="26" y="32" fontSize="24" fill="#f2dfbf" textAnchor="middle" fontFamily="Liberation Sans">@</text>
      </>
    ),
  },
  {
    name: "日历",
    icon: (
      <g transform="rotate(-5 24 24)">
        <rect x="5" y="5" width="40" height="40" rx="4" fill="#f4f4f4" stroke="#999" />
        <path d="M5 17V9q0-4 4-4h32q4 0 4 4v8z" fill="#cd3f3f" />
        <text x="7" y="14" fontSize="8" fill="#fff">9月</text>
        <text x="25" y="38" fontSize="22" fontWeight="bold" fill="#222" textAnchor="middle" fontFamily="Liberation Sans">28</text>
        <path d="M13 1v8M37 1v8" stroke="#bbb" strokeWidth="2" />
      </g>
    ),
  },
  {
    name: "便笺",
    icon: (
      <g transform="rotate(-6 24 24)">
        <path d="M7 4h35v41H7z" fill="#ece576" />
        <path d="M7 2h35v5H7z" fill="#5c2d1a" />
        <path d="M11 13h20M11 17h23M11 21h18M11 28h24M11 32h21M11 36h24M11 40h17" stroke="#796f2e" strokeDasharray="3 1 2 1" />
      </g>
    ),
  },
  {
    name: "地图",
    icon: (
      <g>
        <path d="M2 7l38-7 5 42-37 5z" fill="#f6f2e7" stroke="#ddd" strokeWidth="2" />
        <path d="M4 9l25-5 1 6-25 5z" fill="#66c25b" />
        <path d="M31 3l8-1 1 7-8 1z" fill="#f0a5b5" />
        <path d="M10 46V35l12-10 10 2 2 16" fill="#f7d34b" />
        <path d="M4 19l26-5 5 29" fill="none" stroke="#4ba2e8" strokeWidth="3" />
        <path d="M10 22q6 0 12-3 4 10-5 15-8-3-7-12z" fill="#4c62b5" />
        <path d="M10 22q6 0 12-3l1 4-13 3z" fill="#d8434c" />
        <circle cx="38" cy="36" r="10" fill="#eee" stroke="#bbb" />
        <path d="M37 28l4 9h-6z" fill="#dc2f2f" />
        <path d="M39 45l-4-8h6z" fill="#ccc" />
      </g>
    ),
  },
  {
    name: "信息",
    icon: (
      <>
        <path d="M24 2c13 0 22 8 22 18S37 37 24 37q-3 0-6-1-5 6-13 6 5-4 5-9-8-5-8-13C2 10 11 2 24 2z" fill="url(#bubble)" />
        <path d="M34 25c8 0 14 4 14 10q0 5-4 7 0 3 3 4-5 0-8-2-19 2-20-9c0-6 7-10 15-10z" fill="#e6eef5" stroke="#b9c7d4" />
        <g fill="#6b94b8"><circle cx="28" cy="35" r="2" /><circle cx="34" cy="35" r="2" /><circle cx="40" cy="35" r="2" /></g>
      </>
    ),
  },
  {
    name: "FaceTime",
    icon: (
      <>
        <path d="M34 24l14-14v29z" fill="#b7babd" stroke="#777" />
        <rect x="1" y="8" width="32" height="32" rx="6" fill="#cfd2d4" stroke="#909396" />
        <circle cx="17" cy="24" r="12" fill="#1c2733" />
        <circle cx="17" cy="24" r="8" fill="#26548e" />
        <circle cx="15" cy="21" r="3" fill="#8ec2f0" />
      </>
    ),
  },
  {
    name: "Photo Booth",
    icon: (
      <>
        <path d="M3 0h36v47H3z" fill="#c9c9c9" />
        <path d="M5 4h32v31H5z" fill="#e01c17" />
        <path d="M9 4v31M14 4v31M20 4v31M26 4v31M32 4v31" stroke="#9b0a08" strokeWidth="1.500" />
        <path d="M5 35h32v11H5z" fill="#dedede" />
        <path d="M9 34h14M11 46l4-12M21 46l-4-12" stroke="#5b3b27" strokeWidth="2" />
        <path d="M34 13l14 5-9 30-14-6z" fill="#eee" stroke="#aaa" />
        <path d="M35 16l10 3-2 8-10-4zM32 25l10 3-2 7-10-3zM29 34l10 3-2 7-10-3z" fill="#3b2b28" />
        <g fill="#d9a48a"><circle cx="39" cy="21" r="2.500" /><circle cx="36" cy="30" r="2.500" /><circle cx="33" cy="39" r="2.500" /></g>
      </>
    ),
  },
  {
    name: "iTunes",
    icon: (
      <>
        <circle cx="24" cy="24" r="22" fill="#fbf9fd" stroke="url(#pink)" strokeWidth="3" />
        <path d="M18 34V14l16-4v20" fill="none" stroke="url(#pink)" strokeWidth="4" />
        <ellipse cx="15" cy="34" rx="5" ry="4" fill="#4b8bee" />
        <ellipse cx="31" cy="30" rx="5" ry="4" fill="#a05bd6" />
      </>
    ),
  },
  {
    name: "iBooks",
    icon: (
      <>
        <circle cx="24" cy="24" r="22" fill="#f3901e" stroke="#fff" strokeWidth="2" />
        <path d="M24 16q-7-5-15-2v18q8-2 15 2 7-4 15-2V14q-8-3-15 2z" fill="#fff" />
        <path d="M24 16v18M10 35q8-2 14 2 6-4 14-2" stroke="#f3901e" fill="none" />
      </>
    ),
  },
  {
    name: "App Store",
    icon: (
      <>
        <circle cx="24" cy="24" r="22" fill="url(#blue)" stroke="#dfe7ee" strokeWidth="2" />
        <path d="M26 10L14 35M22 10l12 25M9 29h18M31 29h8" stroke="#f3f7fb" strokeWidth="3.500" fill="none" />
      </>
    ),
  },
  {
    name: "系统偏好设置",
    icon: (
      <>
        <rect x="1" y="4" width="46" height="41" rx="2" fill="#bfc1c3" stroke="#8a8c8e" />
        <rect x="4" y="7" width="40" height="35" fill="#4d4f51" />
        <circle cx="24" cy="25" r="15" fill="none" stroke="#d9d9d9" strokeWidth="4" strokeDasharray="2 1.500" />
        <circle cx="24" cy="25" r="11" fill="none" stroke="#ccc" strokeWidth="5" />
        <path d="M24 25V14M24 25l-9 6M24 25l9 6" stroke="#ccc" strokeWidth="3" />
        <circle cx="24" cy="25" r="4" fill="#aaa" stroke="#555" />
      </>
    ),
  },
  { name: "Word", running: true, icon: <OfficeLetter letter="W" color="#1b7dc9" dark="#0c5699" size={46} /> },
  { name: "PowerPoint", icon: <OfficeLetter letter="P" color="#ea3a1e" dark="#b01d0c" /> },
  { name: "Excel", icon: <OfficeLetter letter="X" color="#22a544" dark="#0f7a2f" /> },
  { name: "Outlook", icon: <OfficeLetter letter="O" color="#f5c31f" dark="#c18a08" /> },
  { name: "Communicator", icon: <OfficeLetter letter="C" color="#149cbd" dark="#0a708d" /> },
  {
    name: "Messenger",
    icon: (
      <>
        <circle cx="15" cy="12" r="8" fill="#a1cf3b" />
        <path d="M15 20q12 0 12 14 0 8-12 8T3 34q0-14 12-14z" fill="#8cbc2c" />
        <circle cx="33" cy="9" r="9" fill="#2ba5e0" />
        <path d="M33 18q13 0 13 16 0 11-13 11T20 34q0-16 13-16z" fill="#1787c8" />
      </>
    ),
  },
  {
    name: "下载",
    icon: (
      <>
        <ellipse cx="24" cy="38" rx="19" ry="9" fill="#d8dde1" stroke="#888" />
        <path d="M10 37q2-6 14-6v6z" fill="#e2572e" />
        <path d="M38 37q-2-6-14-6v6z" fill="#f0a92c" />
        <path d="M10 37q2 7 14 7t14-7z" fill="#3c9a58" />
        <circle cx="24" cy="18" r="17" fill="url(#blue)" />
        <path d="M13 9q8-6 11 0l-4 8-8 2zM30 6l8 8-6 6-5-6z" fill="#c9def2" />
        <path d="M24 11l9 8h-5v13h6L24 45 14 32h6V19h-5z" fill="#8fce43" stroke="#578f1f" />
      </>
    ),
  },
  {
    name: "远程桌面连接",
    icon: (
      <>
        <path d="M1 0q0 20 20 25Q27 8 1 0z" fill="#d5d8da" stroke="#777" />
        <path d="M1 0q14 8 20 25M9 14L24 3M8 18L2 28l12-5" fill="none" stroke="#999" strokeWidth="2" />
        <rect x="15" y="19" width="34" height="25" fill="#a8adb3" stroke="#666" />
        <rect x="17" y="21" width="30" height="21" fill="#2f9dab" />
        <path d="M25 24q3-2 7 0l-1 7q-3-2-7 0z" fill="#ef5a28" />
        <path d="M33 24q3 2 7 0l-1 7q-3 2-7 0z" fill="#7fba42" />
        <path d="M24 32q3-2 7 0l-1 7q-3-2-7 0z" fill="#3f9ee8" />
        <path d="M32 32q3 2 7 0l-1 7q-3 2-7 0z" fill="#fcc52a" />
        <path d="M28 44h9l3 4H25z" fill="#bbb" />
      </>
    ),
  },
];

const DockSlot: React.FC<{ name: string; running?: boolean; children: React.ReactNode }> = ({ name, running, children }) => (
  <button type="button" aria-label={name} className="flex w-[53px] shrink-0 flex-col items-center justify-between">
    <span className="size-12 [-webkit-box-reflect:below_0px_linear-gradient(transparent_75%,#0005)]">
      <svg viewBox="0 0 48 48" className="size-12 overflow-visible">{children}</svg>
    </span>
    {running && <span className="h-[3px] w-3 rounded-full bg-[#e8faff] shadow-[0_0_4px_2px_#8fdcff]" />}
  </button>
);

const STARS = [
  [20, 38], [42, 12], [78, 24], [210, 8], [420, 10], [470, 18], [640, 22], [742, 6],
  [870, 10], [894, 8], [1002, 22], [1046, 12], [1150, 6], [1300, 12], [1400, 28], [1422, 44], [1432, 60],
];

const Dock: React.FC = () => (
  <div className="relative flex h-[72px] shrink-0 justify-center overflow-hidden bg-linear-to-r from-[#1b384b] via-[#071a2c] via-30% to-[#02070e]">
    <svg className="absolute inset-0 size-full" fill="#b4c8d8">
      {STARS.map(([x, y]) => (
        <circle key={x} cx={x} cy={y} r="1" opacity=".6" />
      ))}
      <defs>
        <linearGradient id="finder" x2="0" y2="1"><stop stopColor="#6b98e6" /><stop offset="1" stopColor="#3c5fb0" /></linearGradient>
        <linearGradient id="blue" x2="0" y2="1"><stop stopColor="#134aa8" /><stop offset="1" stopColor="#35b5f5" /></linearGradient>
        <linearGradient id="silver" x2="1" y2="1"><stop stopColor="#8a8a8a" /><stop offset=".5" stopColor="#dcdcdc" /><stop offset="1" stopColor="#7f7f7f" /></linearGradient>
        <linearGradient id="mail" x2="0" y2="1"><stop stopColor="#5a9be0" /><stop offset="1" stopColor="#a7cdf0" /></linearGradient>
        <linearGradient id="bubble" x2="0" y2="1"><stop stopColor="#62b8f7" /><stop offset="1" stopColor="#1a86e8" /></linearGradient>
        <linearGradient id="pink" x2="0" y2="1"><stop stopColor="#f6437f" /><stop offset=".6" stopColor="#b05be0" /><stop offset="1" stopColor="#38b0f5" /></linearGradient>
        <pattern id="mesh" width="3" height="3" patternUnits="userSpaceOnUse"><path d="M0 0l3 3M3 0L0 3" stroke="#999" strokeWidth=".6" /></pattern>
      </defs>
    </svg>
    <div className="absolute inset-x-[25px] bottom-[3px] h-[38px] bg-linear-to-b from-[#8d969f] to-[#ccd0d5] [clip-path:polygon(23px_0,calc(100%-23px)_0,100%_100%,0_100%)]" />
    <div className="absolute inset-x-[25px] bottom-0 h-1 border-t border-white bg-[#8e9296]" />
    <nav aria-label="Dock" className="relative flex pt-[10px] pl-[6px]">
      {DOCK_ICONS.map((item) => (
        <DockSlot key={item.name} name={item.name} running={item.running}>
          {item.icon}
        </DockSlot>
      ))}
      <span className="mt-6 mb-3 w-6">
        <svg viewBox="0 0 24 28" className="h-7 w-6"><path d="M8 0l7 27" stroke="#6e757c" /></svg>
      </span>
      <DockSlot name="文稿">
        <path d="M8 1h23l9 10v34H8z" fill="#f6f6f6" stroke="#bbb" />
        <path d="M31 1v10h9z" fill="#ccc" />
        <path d="M16 18h16l2 20H14z" fill="#b5b8bb" stroke="#888" />
        <ellipse cx="24" cy="26" rx="6" ry="5" fill="#d9dbdd" stroke="#999" />
        <path d="M14 35h20" stroke="#777" />
      </DockSlot>
      <DockSlot name="废纸篓">
        <path d="M6 6h36l-5 38q-13 5-26 0z" fill="#333" />
        <path d="M6 6h36l-5 38q-13 5-26 0z" fill="url(#mesh)" stroke="#aaa" />
        <ellipse cx="24" cy="6" rx="18" ry="5" fill="#2a2a2a" stroke="#ccc" strokeWidth="2" />
      </DockSlot>
    </nav>
  </div>
);

export default function App() {
  return (
    <div className="flex h-screen flex-col overflow-hidden bg-black font-['Noto_Sans','Noto_Sans_CJK_SC',sans-serif]">
      <MenuBar />
      <TitleBar />
      <RibbonTabs />
      <Ribbon />
      <HorizontalRuler />
      <Workspace />
      <StatusBar />
      <Dock />
    </div>
  );
}
